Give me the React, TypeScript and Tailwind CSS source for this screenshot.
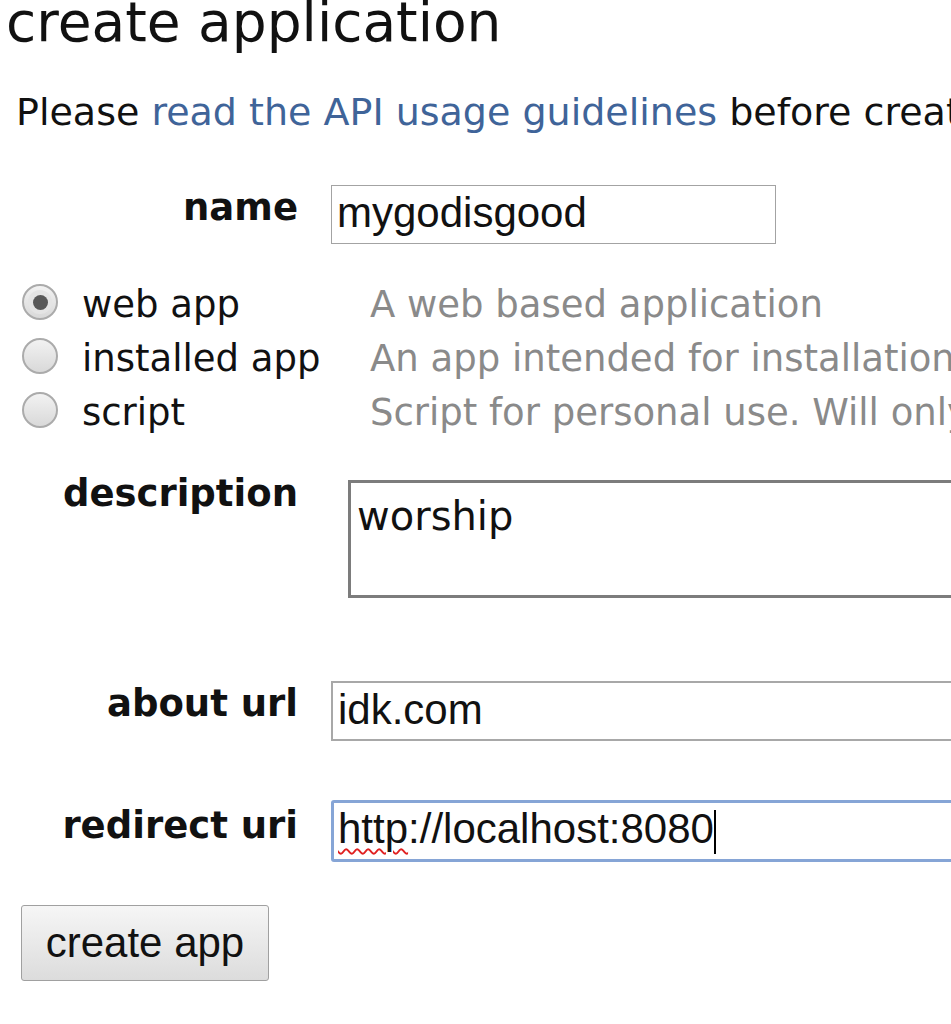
import React from "react";

const radios = [
  { label: "web app", desc: "A web based application", checked: true },
  { label: "installed app", desc: "An app intended for installation, such as on a mobile phone", checked: false },
  { label: "script", desc: "Script for personal use. Will only have access to the developer's accounts", checked: false },
];

function Radio({ checked }: { checked: boolean }) {
  return (
    <span className="mt-[6px] ml-[22px] flex h-[36px] w-[36px] shrink-0 items-center justify-center rounded-full border-2 border-[#ababab] bg-gradient-to-b from-[#f2f2f2] to-[#d9d9d9]">
      {checked && (
        <span className="flex h-[24px] w-[24px] items-center justify-center rounded-full bg-[#e4e4e4]">
          <span className="h-[15px] w-[15px] rounded-full bg-[#585858]" />
        </span>
      )}
    </span>
  );
}

function Label({ children, className = "" }: { children: React.ReactNode; className?: string }) {
  return (
    <div className={`w-[298px] shrink-0 text-right text-[37px] font-bold leading-[44px] text-[#111] ${className}`}>
      {children}
    </div>
  );
}

export default function App() {
  return (
    <div className="relative h-[1024px] w-[951px] overflow-hidden bg-white font-['DejaVu_Sans',Verdana,sans-serif] text-[#111]">
      {/* Title */}
      <h1 className="mt-[-5px] whitespace-nowrap pl-[6px] text-[55px] font-normal leading-[55px]">
        create application
      </h1>

      {/* Intro */}
      <p className="mt-[40px] whitespace-nowrap pl-[16px] text-[38px] leading-[44px]">
        Please <a className="text-[#3f6499]">read the API usage guidelines</a> before creating your application.
      </p>

      {/* name */}
      <div className="mt-[51px] flex items-start">
        <Label className="mt-[1px]">name</Label>
        <div className="ml-[33px] h-[59px] w-[445px] shrink-0 border border-[#a3a3a3] pl-[5px] pt-[6px] font-['Liberation_Sans',Arial,sans-serif] text-[42px] leading-[42px]">
          mygodisgood
        </div>
      </div>

      {/* app type */}
      <div className="mt-[34px] flex flex-col">
        {radios.map((r) => (
          <div key={r.label} className="flex h-[54px] items-start whitespace-nowrap text-[37px] leading-[54px]">
            <Radio checked={r.checked} />
            <span className="ml-[24px] w-[288px] shrink-0">{r.label}</span>
            <span className="text-[#8a8a8a]">{r.desc}</span>
          </div>
        ))}
      </div>

      {/* description */}
      <div className="mt-[32px] flex items-start">
        <Label>description</Label>
        <div className="ml-[50px] mt-[8px] h-[118px] w-[700px] shrink-0 border-[3px] border-[#7c7c7c] pl-[6px] pt-[10px] text-[40px] leading-[46px]">
          worship
        </div>
      </div>

      {/* about url */}
      <div className="mt-[83px] flex items-start">
        <Label className="mt-[1px]">about url</Label>
        <div className="ml-[33px] h-[60px] w-[700px] shrink-0 border-2 border-[#a8a8a8] pl-[5px] pt-[6px] font-['Liberation_Sans',Arial,sans-serif] text-[42px] leading-[42px]">
          idk.com
        </div>
      </div>

      {/* redirect uri */}
      <div className="mt-[59px] flex items-start">
        <Label className="mt-[4px]">redirect uri</Label>
        <div className="ml-[33px] flex h-[62px] w-[700px] shrink-0 items-start rounded-[3px] border-[3px] border-[#86a5d6] pl-[4px] pt-[5px] font-['Liberation_Sans',Arial,sans-serif] text-[42px] leading-[42px]">
          <span className="underline decoration-[#e02020] decoration-wavy decoration-[2px] underline-offset-[5px]">http</span>
          <span>://localhost:8080</span>
          <span className="mt-[2px] h-[44px] w-[2px] bg-black" />
        </div>
      </div>

      {/* submit */}
      <button className="ml-[21px] mt-[43px] h-[76px] w-[248px] rounded-[3px] border border-[#a0a0a0] bg-gradient-to-b from-[#f6f6f6] to-[#dcdcdc] font-['Liberation_Sans',Arial,sans-serif] text-[42px] leading-[42px] text-[#111]">
        create app
      </button>
    </div>
  );
}
